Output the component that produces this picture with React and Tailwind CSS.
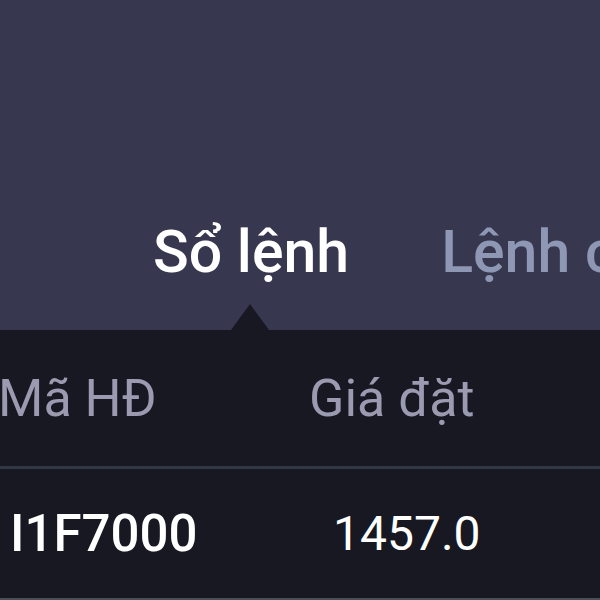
export default function App() {
  return (
    <div className="w-[600px] h-[600px] overflow-hidden bg-[#171822] flex flex-col" style={{ fontFamily: "Roboto, 'Noto Sans', sans-serif" }}>
      <div className="h-[330px] bg-[#37384f] shrink-0 flex items-end pl-[153px] pb-[38px] gap-[92px] overflow-hidden">
        <div className="relative text-[59px] leading-[80px] font-medium text-white whitespace-nowrap">
          Sổ lệnh
          <div className="absolute left-[78px] top-[92px] w-0 h-0 border-l-[19px] border-r-[19px] border-b-[26px] border-l-transparent border-r-transparent border-b-[#171822]" />
        </div>
        <div className="text-[59px] leading-[80px] font-medium text-[#8e97b3] whitespace-nowrap">Lệnh chờ</div>
      </div>
      <div className="h-[136px] shrink-0 flex items-center pt-[2px] text-[52px] leading-[70px] text-[#9a9bb0] whitespace-nowrap">
        <div className="w-[311px] -ml-[2px]">Mã HĐ</div>
        <div>Giá đặt</div>
      </div>
      <div className="h-[3px] bg-[#323843] shrink-0" />
      <div className="h-[129px] shrink-0 flex items-center text-white whitespace-nowrap">
        <div className="w-[333px] pl-[10px] text-[51px] leading-[70px] font-medium">I1F7000</div>
        <div className="text-[48px] leading-[70px]">1457.0</div>
      </div>
      <div className="h-[2px] bg-[#4a4e58] shrink-0" />
    </div>
  );
}
